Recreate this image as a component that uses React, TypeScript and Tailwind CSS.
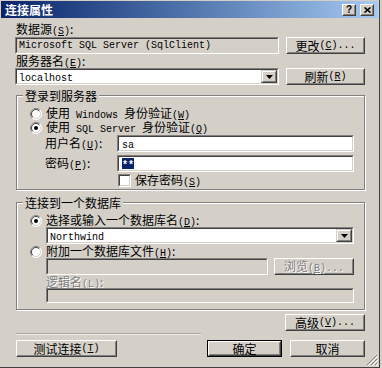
import type { ReactNode } from "react";

const L = ({ children }: { children: ReactNode }) => (
  <span className="font-['Liberation_Mono',monospace] text-[10px] leading-[10px]">{children}</span>
);

const Mn = ({ k }: { k: string }) => (
  <L>
    (<span className="underline underline-offset-1">{k}</span>)
  </L>
);

function Field({
  className = "",
  bg = "bg-white",
  children,
}: {
  className?: string;
  bg?: string;
  children?: ReactNode;
}) {
  return (
    <div className={`border border-t-[#808080] border-l-[#808080] border-r-white border-b-white ${className}`}>
      <div
        className={`flex h-full items-center border border-t-[#404040] border-l-[#404040] border-r-[#d4d0c8] border-b-[#d4d0c8] pl-[2px] ${bg}`}
      >
        {children}
      </div>
    </div>
  );
}

function Btn({
  className = "",
  isDefault = false,
  children,
}: {
  className?: string;
  isDefault?: boolean;
  children: ReactNode;
}) {
  return (
    <button className={`flex bg-[#d4d0c8] ${isDefault ? "border border-black" : ""} ${className}`}>
      <div className="flex h-full w-full border border-t-white border-l-white border-r-[#404040] border-b-[#404040]">
        <div className="flex h-full w-full items-center justify-center border border-t-[#d4d0c8] border-l-[#d4d0c8] border-r-[#808080] border-b-[#808080]">
          {children}
        </div>
      </div>
    </button>
  );
}

function Combo({ className = "", children }: { className?: string; children: ReactNode }) {
  return (
    <Field className={className}>
      <span className="flex-1">{children}</span>
      <div className="flex h-full w-[16px] border border-t-[#d4d0c8] border-l-[#d4d0c8] border-r-[#404040] border-b-[#404040] bg-[#d4d0c8]">
        <div className="flex h-full w-full items-center justify-center border border-t-white border-l-white border-r-[#808080] border-b-[#808080]">
          <svg width="7" height="4" viewBox="0 0 7 4">
            <path d="M0 0h7L3.5 4z" fill="#000" />
          </svg>
        </div>
      </div>
    </Field>
  );
}

function Radio({ checked = false }: { checked?: boolean }) {
  return (
    <svg width="12" height="12" viewBox="0 0 12 12" className="shrink-0">
      <circle cx="6" cy="6" r="5.5" fill="#fff" />
      <path d="M2.1 9.9A5.5 5.5 0 0 1 9.9 2.1" stroke="#808080" fill="none" />
      <path d="M9.9 2.1A5.5 5.5 0 0 1 2.1 9.9" stroke="#fff" fill="none" />
      <path d="M2.8 9.2A4.5 4.5 0 0 1 9.2 2.8" stroke="#404040" fill="none" />
      <path d="M9.2 2.8A4.5 4.5 0 0 1 2.8 9.2" stroke="#d4d0c8" fill="none" />
      {checked && <circle cx="6" cy="6" r="2" fill="#000" />}
    </svg>
  );
}

function Group({ title, className = "", children }: { title: string; className?: string; children: ReactNode }) {
  return (
    <div
      className={`relative ml-[1px] w-[349px] border border-[#808080] shadow-[inset_1px_1px_0_#fff,1px_1px_0_#fff] ${className}`}
    >
      <span className="absolute -top-[7px] left-[6px] h-[13px] bg-[#d4d0c8] px-[2px]">{title}</span>
      {children}
    </div>
  );
}

function TitleBtn({ children }: { children: ReactNode }) {
  return (
    <div className="flex h-[12px] w-[14px] border border-t-white border-l-white border-r-[#404040] border-b-[#404040] bg-[#d4d0c8]">
      <div className="flex h-full w-full items-center justify-center border border-t-[#d4d0c8] border-l-[#d4d0c8] border-r-[#808080] border-b-[#808080]">
        {children}
      </div>
    </div>
  );
}

const disabled = "text-[#808080] [text-shadow:1px_1px_0_#fff]";

export default function App() {
  return (
    <div className="h-[368px] w-[382px] bg-[#d4d0c8] font-['Noto_Sans_CJK_SC',sans-serif] text-[12px] leading-[13px] text-black">
      <div className="relative flex h-[368px] w-[380px] flex-col border-r border-b border-r-[#404040] border-b-[#404040]">
        {/* title bar */}
        <div className="mx-[1px] mt-[1px] flex h-[17px] shrink-0 items-center justify-between bg-linear-to-r from-[#0a246a] to-[#a6caf0] pl-[4px] pr-[4px]">
          <span className="font-bold text-white">连接属性</span>
          <div className="flex gap-[4px]">
            <TitleBtn>
              <span className="font-['Liberation_Sans',sans-serif] text-[10px] font-bold leading-[10px]">?</span>
            </TitleBtn>
            <TitleBtn>
              <svg width="7" height="6" viewBox="0 0 7 6">
                <path d="M0.5 0.5L6.5 5.5M6.5 0.5L0.5 5.5" stroke="#000" strokeWidth="1.6" />
              </svg>
            </TitleBtn>
          </div>
        </div>

        <div className="flex flex-col pl-[15px] pr-[14px] pt-[5px]">
          <div className="flex h-[13px] items-center pl-[1px]">
            <span>
              数据源<Mn k="S" />:
            </span>
          </div>
          <div className="mt-[1px] flex h-[17px]">
            <Field className="w-[264px]" bg="bg-[#d4d0c8]">
              <L>Microsoft SQL Server (SqlClient)</L>
            </Field>
            <Btn className="ml-auto w-[79px]">
              更改<Mn k="C" />
              <L>...</L>
            </Btn>
          </div>

          <div className="mt-[1px] flex h-[13px] items-center pl-[1px]">
            <span>
              服务器名<Mn k="E" />:
            </span>
          </div>
          <div className="flex h-[17px]">
            <Combo className="w-[264px]">
              <L>localhost</L>
            </Combo>
            <Btn className="ml-auto w-[79px]">
              刷新<Mn k="R" />
            </Btn>
          </div>

          {/* login group */}
          <Group title="登录到服务器" className="mt-[10px] h-[95px]">
            <div className="flex flex-col pl-[13px] pt-[11px]">
              <div className="flex h-[13px] items-center gap-[4px]">
                <Radio />
                <span>
                  使用<L> Windows </L>身份验证<Mn k="W" />
                </span>
              </div>
              <div className="mt-[1px] flex h-[13px] items-center gap-[4px]">
                <Radio checked />
                <span>
                  使用<L> SQL Server </L>身份验证<Mn k="Q" />
                </span>
              </div>
              <div className="mt-[1px] flex h-[17px] items-center">
                <span className="ml-[15px] w-[72px]">
                  用户名<Mn k="U" />:
                </span>
                <Field className="h-[17px] w-[237px]">
                  <span className="pl-[1px]">
                    <L>sa</L>
                  </span>
                </Field>
              </div>
              <div className="mt-[3px] flex h-[17px] items-center">
                <span className="ml-[15px] w-[72px]">
                  密码<Mn k="P" />:
                </span>
                <Field className="h-[17px] w-[237px]">
                  <span className="ml-[1px] h-[11px] bg-[#0a246a] font-['Liberation_Mono',monospace] text-[10px] font-bold leading-[15px] text-white">
                    **
                  </span>
                </Field>
              </div>
              <div className="mt-[2px] flex h-[13px] items-center">
                <Field className="ml-[88px] h-[13px] w-[13px]" />
                <span className="ml-[4px]">
                  保存密码<Mn k="S" />
                </span>
              </div>
            </div>
          </Group>

          {/* database group */}
          <Group title="连接到一个数据库" className="mt-[12px] h-[108px]">
            <div className="flex flex-col pl-[13px] pt-[11px]">
              <div className="flex h-[13px] items-center gap-[4px]">
                <Radio checked />
                <span>
                  选择或输入一个数据库名<Mn k="D" />:
                </span>
              </div>
              <Combo className="ml-[16px] h-[17px] w-[308px]">
                <L>Northwind</L>
              </Combo>
              <div className="mt-[1px] flex h-[13px] items-center gap-[4px]">
                <Radio />
                <span>
                  附加一个数据库文件<Mn k="H" />:
                </span>
              </div>
              <div className="ml-[16px] flex h-[17px]">
                <Field className="w-[222px]" bg="bg-[#d4d0c8]" />
                <Btn className="ml-[6px] w-[80px]">
                  <span className={disabled}>
                    浏览<Mn k="B" />
                    <L>...</L>
                  </span>
                </Btn>
              </div>
              <div className={`ml-[16px] mt-[1px] flex h-[12px] items-center ${disabled}`}>
                <span>
                  逻辑名<Mn k="L" />:
                </span>
              </div>
              <Field className="ml-[16px] h-[15px] w-[308px]" bg="bg-[#d4d0c8]" />
            </div>
          </Group>

          <div className="mt-[4px] flex h-[17px] justify-end">
            <Btn className="w-[80px]">
              高级<Mn k="V" />
              <L>...</L>
            </Btn>
          </div>

          <div className="ml-[1px] mt-[2px] h-[2px] w-[185px] border-t border-b border-t-[#aeaaa2] border-b-[#ecebe7]" />

          <div className="mt-[5px] flex h-[17px]">
            <Btn className="ml-[1px] w-[101px]">
              测试连接<Mn k="T" />
            </Btn>
            <div className="ml-auto flex gap-[8px]">
              <Btn isDefault className="w-[75px]">
                确定
              </Btn>
              <Btn className="w-[75px]">取消</Btn>
            </div>
          </div>
        </div>

        {/* size grip */}
        <svg width="12" height="12" viewBox="0 0 12 12" className="absolute bottom-[1px] right-[1px]">
          <path d="M11 1L1 11M11 5L5 11M11 9L9 11" stroke="#808080" />
          <path d="M12 2L2 12M12 6L6 12M12 10L10 12" stroke="#fff" />
        </svg>
      </div>
    </div>
  );
}
